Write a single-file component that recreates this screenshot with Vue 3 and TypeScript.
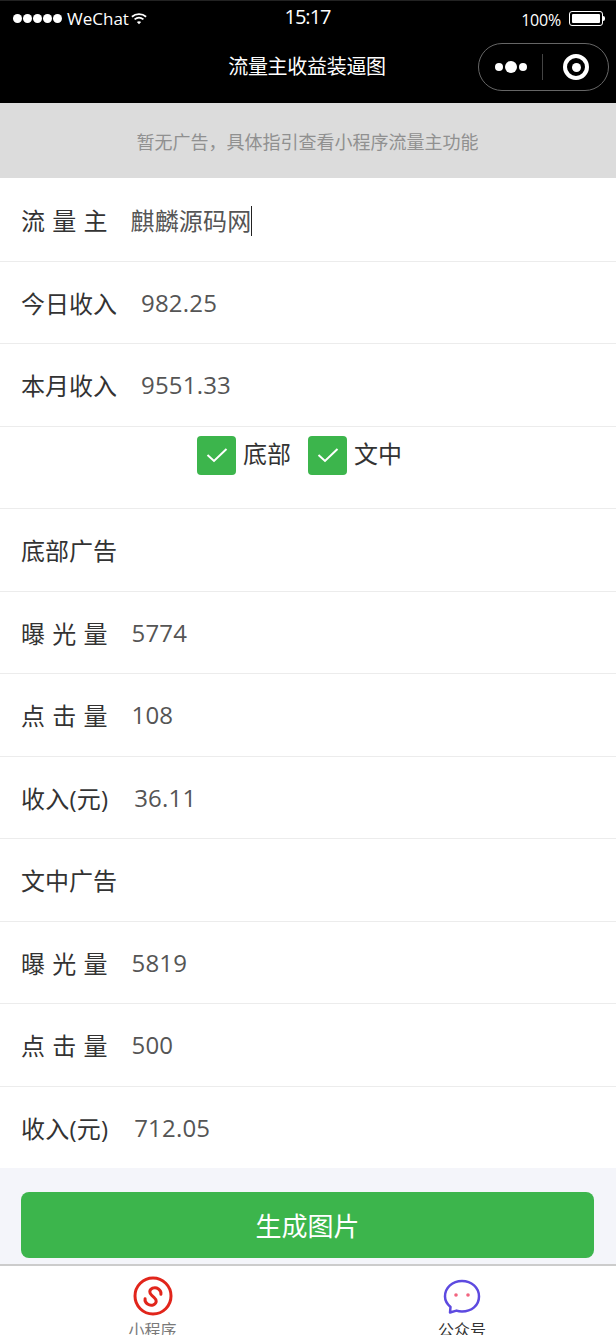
<template>
  <div class="page">
    <!-- status + nav -->
    <header class="top">
      <div class="status">
        <div class="status-left">
          <span class="signal"><i v-for="n in 5" :key="n"></i></span>
          <span class="carrier">WeChat</span>
          <svg class="wifi" width="16" height="13" viewBox="0 0 18 14">
            <path d="M1 5 C5.500 1 12.500 1 17 5" fill="none" stroke="#fff" stroke-width="2" />
            <path d="M4 8 C7 5.600 11 5.600 14 8" fill="none" stroke="#fff" stroke-width="2" />
            <path d="M6.600 10.800 C8 9.800 10 9.800 11.400 10.800 L9 13.400 Z" fill="#fff" />
          </svg>
        </div>
        <div class="clock">15:17</div>
        <div class="status-right">
          <span class="pct">100%</span>
          <span class="battery"><i></i></span>
          <span class="battery-tip"></span>
        </div>
      </div>
      <div class="nav">
        <div></div>
        <div class="nav-title">流量主收益装逼图</div>
        <div class="nav-right">
          <div class="capsule">
            <span class="more"><i></i><i class="big"></i><i></i></span>
            <span class="sep"></span>
            <span class="target"><i></i></span>
          </div>
        </div>
      </div>
    </header>

    <div class="ad">暂无广告，具体指引查看小程序流量主功能</div>

    <section class="form">
      <template v-for="row in rows" :key="row.id">
        <div v-if="row.kind === 'checks'" class="row checks">
          <label v-for="c in checks" :key="c" class="check">
            <span class="box">
              <svg width="22" height="16" viewBox="0 0 22 16">
                <path d="M1.500 8 L8 14 L20.500 2" fill="none" stroke="#fff" stroke-width="2" />
              </svg>
            </span>
            <span class="check-text">{{ c }}</span>
          </label>
        </div>
        <div v-else class="row">
          <span class="label" :class="{ money: row.money }">{{ row.label }}</span>
          <span v-if="row.value" class="value" :class="{ typed: row.caret }">{{ row.value }}<i v-if="row.caret" class="caret"></i></span>
        </div>
      </template>
    </section>

    <div class="actions">
      <button class="submit">生成图片</button>
    </div>

    <nav class="tabbar">
      <div class="tab first">
        <svg class="ring" width="40" height="40" viewBox="0 0 40 40">
          <circle cx="20" cy="20" r="18" fill="none" stroke="#e1251b" stroke-width="3" />
          <path d="M26.500 15 C25.500 10.500 19.500 9.500 16.500 12.500 C13.500 15.500 15.500 18.500 18.500 19.500 L21.500 20.500 C24.500 21.500 26.500 24.500 23.500 27.500 C20.500 30.500 14.500 29.500 13.500 25" transform="rotate(22 20 20.500) translate(0 0.500)" fill="none" stroke="#e1251b" stroke-width="3" stroke-linecap="round" />
        </svg>
        <span class="tab-text">小程序</span>
      </div>
      <div class="tab">
        <svg width="40" height="40" viewBox="0 0 40 40">
          <path d="M20 4 C29.500 4 37 10.500 37 19.500 C37 28.500 29.500 34.500 20 34.500 C18 34.500 16 34.200 14.500 33.600 L8 35.500 L8.500 30 C5 27 3 23.500 3 19.500 C3 10.500 10.500 4 20 4 Z" fill="none" stroke="#5d4ae0" stroke-width="2.500" stroke-linejoin="round" />
          <circle cx="14" cy="18" r="1.800" fill="#f2647f" />
          <circle cx="26" cy="18" r="1.800" fill="#f2647f" />
        </svg>
        <span class="tab-text dark">公众号</span>
      </div>
    </nav>
  </div>
</template>

<script setup lang="ts">
interface Row {
  id: string;
  kind?: "checks";
  label?: string;
  value?: string;
  caret?: boolean;
  money?: boolean;
}

const rows: Row[] = [
  { id: "owner", label: "流 量 主", value: "麒麟源码网", caret: true },
  { id: "today", label: "今日收入", value: "982.25" },
  { id: "month", label: "本月收入", value: "9551.33" },
  { id: "checks", kind: "checks" },
  { id: "bottom", label: "底部广告" },
  { id: "b-show", label: "曝 光 量", value: "5774" },
  { id: "b-click", label: "点 击 量", value: "108" },
  { id: "b-money", label: "收入(元)", value: "36.11", money: true },
  { id: "middle", label: "文中广告" },
  { id: "m-show", label: "曝 光 量", value: "5819" },
  { id: "m-click", label: "点 击 量", value: "500" },
  { id: "m-money", label: "收入(元)", value: "712.05", money: true },
];

const checks = ["底部", "文中"];
</script>

<style>
body {
  margin: 0;
  background: #f4f5fa;
}
</style>

<style scoped>
.page {
  width: 616px;
  height: 1335px;
  overflow: hidden;
  display: flex;
  flex-direction: column;
  background: #f4f5fa;
  font-family: "Open Sans", "Noto Sans CJK SC", sans-serif;
}

.top {
  height: 103px;
  box-sizing: border-box;
  flex: none;
  background: #000;
  border-top: 1px solid #222;
  color: #fff;
}

.status {
  height: 34px;
  display: grid;
  grid-template-columns: 1fr auto 1fr;
  align-items: center;
}

.status-left {
  display: flex;
  align-items: center;
  padding-left: 13px;
}

.signal {
  display: flex;
  gap: 1px;
  margin-right: 5px;
}

.signal i {
  width: 9px;
  height: 9px;
  border-radius: 50%;
  background: #fff;
}

.carrier {
  font-size: 17px;
}

.wifi {
  margin-left: 2px;
}

.clock {
  font-size: 20px;
  letter-spacing: -1px;
  line-height: 30px;
  margin: -3px 0 0 -1px;
}

.status-right {
  display: flex;
  align-items: center;
  justify-content: flex-end;
  padding-right: 11px;
}

.pct {
  font-size: 16px;
  letter-spacing: -0.200px;
  margin-right: 8px;
  margin-top: 3px;
}

.battery {
  width: 34px;
  height: 15px;
  box-sizing: border-box;
  border: 1px solid #fff;
  border-radius: 3px;
  padding: 2px;
  margin-top: 1px;
}

.battery i {
  display: block;
  height: 100%;
  background: #fff;
  border-radius: 1px;
}

.battery-tip {
  width: 2px;
  height: 5px;
  margin-top: 1px;
  background: #fff;
  border-radius: 0 2px 2px 0;
}

.nav {
  height: 68px;
  display: grid;
  grid-template-columns: 1fr auto 1fr;
  align-items: center;
}

.nav-title {
  font-size: 20px;
  line-height: 28px;
  letter-spacing: -0.300px;
  margin: -5px 0 0 -2px;
}

.nav-right {
  display: flex;
  justify-content: flex-end;
  padding-right: 7px;
}

.capsule {
  width: 131px;
  height: 48px;
  box-sizing: border-box;
  border: 1px solid #666;
  border-radius: 24px;
  margin-top: -4px;
  display: flex;
  align-items: center;
}

.more {
  display: flex;
  align-items: center;
  gap: 2px;
  margin-left: 16px;
}

.more i {
  width: 8px;
  height: 8px;
  border-radius: 50%;
  background: #fff;
}

.more i.big {
  width: 12px;
  height: 12px;
}

.sep {
  width: 1px;
  height: 26px;
  background: #444;
  margin-left: 15px;
}

.target {
  width: 26px;
  height: 26px;
  box-sizing: border-box;
  border: 4px solid #fff;
  border-radius: 50%;
  margin-left: 20px;
  display: flex;
  align-items: center;
  justify-content: center;
}

.target i {
  width: 9px;
  height: 9px;
  border-radius: 50%;
  background: #fff;
}

.ad {
  height: 75px;
  flex: none;
  box-sizing: border-box;
  padding-right: 1px;
  background: #dcdcdc;
  color: #909090;
  font-size: 18px;
  display: flex;
  align-items: center;
  justify-content: center;
}

.form {
  flex: none;
  background: #fff;
}

.row {
  height: 82.500px;
  box-sizing: border-box;
  padding-left: 21px;
  border-bottom: 1px solid #ececec;
  display: flex;
  align-items: center;
  gap: 24px;
  font-size: 24px;
  word-spacing: 1px;
  color: #333;
}

.row:first-child {
  height: 83.500px;
}

.row:last-child {
  height: 81.500px;
  border-bottom: 0;
}

.label.money {
  letter-spacing: 0.200px;
  margin-right: 2px;
}

.value {
  color: #555;
  letter-spacing: 0.200px;
}

.value.typed {
  margin-left: -1px;
}

.caret {
  display: inline-block;
  width: 1px;
  height: 30px;
  background: #222;
  vertical-align: -6px;
}

.row.checks {
  padding: 9px 0 0;
  align-items: flex-start;
  justify-content: center;
  gap: 0;
}

.check {
  display: flex;
  align-items: center;
  margin-right: 17px;
}

.box {
  width: 39px;
  height: 39px;
  border-radius: 4px;
  background: #3cb54c;
  display: flex;
  align-items: center;
  justify-content: center;
  margin-right: 7px;
}

.check-text {
  line-height: 36px;
  margin-top: -2px;
}

.actions {
  flex: none;
  box-sizing: border-box;
  height: 96px;
  padding: 24px 22px 0 21px;
}

.submit {
  width: 100%;
  height: 66px;
  display: block;
  border: 0;
  border-radius: 8px;
  background: #3cb54c;
  color: #fff;
  font-family: inherit;
  font-size: 26px;
}

.tabbar {
  flex: 1;
  min-height: 0;
  background: #fff;
  border-top: 2px solid #ccc;
  display: grid;
  grid-template-columns: 1fr 1fr;
}

.tab {
  display: flex;
  flex-direction: column;
  align-items: center;
  padding-top: 11px;
}

.tab.first {
  padding-right: 3px;
}

.tab svg {
  flex: none;
}

.ring {
  margin: -1px 0 1px;
}

.tab-text {
  font-size: 16px;
  line-height: 22px;
  margin-top: 2px;
  color: #7a7a7a;
  white-space: nowrap;
}

.tab-text.dark {
  color: #333;
}
</style>
